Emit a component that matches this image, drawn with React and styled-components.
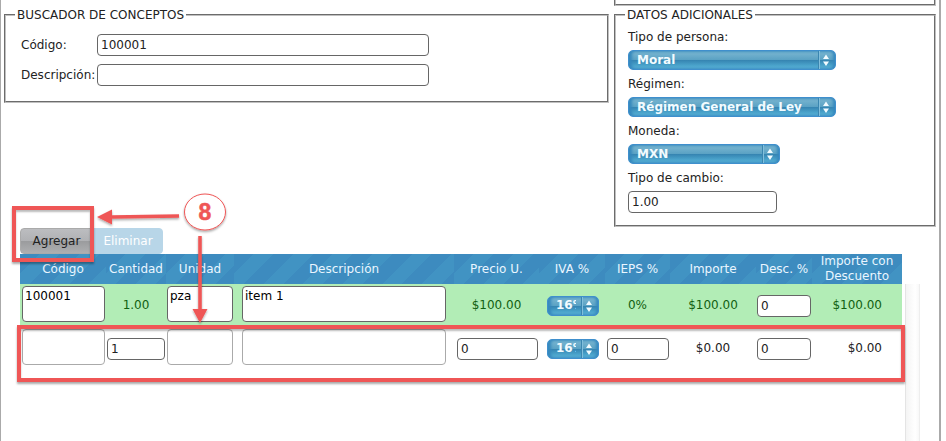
import React from "react";
import styled, { createGlobalStyle, css } from "styled-components";

const Global = createGlobalStyle`
  * { box-sizing: border-box; }
  body { margin: 0; background: #fff; color: #222; font: 12px/15px Verdana, "DejaVu Sans", sans-serif; }
  input, textarea, select, button { font: inherit; color: inherit; }
`;

const RED = "#ef5656";

const Page = styled.main`
  display: flex;
  flex-direction: column;
  margin-right: 5px;
  min-height: 100vh;
  border-left: 1px solid #aaa;
  border-right: 2px solid #aaa;
  padding: 0 3px;
`;

const Columns = styled.div`
  display: grid;
  grid-template-columns: minmax(0, 605fr) minmax(0, 322fr);
  column-gap: 5px;
  align-items: start;
`;

const PanelEnd = styled.div`
  grid-column: 2;
  height: 6px;
  border: 2px groove #c0c0c0;
  border-top: 0;
`;

const Panel = styled.fieldset`
  margin: 0;
  min-width: 0;
  border: 2px groove #c0c0c0;
  padding: ${(p) => (p.$roomy ? "11px 15px 15px" : "7px 12px 12px")};
`;

const Legend = styled.legend`
  margin-left: ${(p) => (p.$roomy ? "-6px" : "-3px")};
  padding: 2px 2px 0;
`;

const fieldBorder = css`
  border: 1px solid #666;
  border-radius: 4px;
  background: #fff;
`;

const TextInput = styled.input`
  ${fieldBorder}
  display: block;
  width: 100%;
  height: 22px;
  padding: 0 3px;
`;

const TextBox = styled.textarea`
  ${fieldBorder}
  border-color: ${(p) => (p.$pale ? "#aaa" : "#666")};
  display: block;
  width: 100%;
  height: 36px;
  padding: 2px;
  resize: none;
  overflow: hidden;
  color: #000;
`;

const SearchRow = styled.div`
  display: grid;
  grid-template-columns: 76px minmax(0, 332px);
  align-items: center;
  & + & { margin-top: 8px; }
`;

const Stack = styled.div`
  display: grid;
  gap: 7px;
  justify-items: start;
`;

const Field = styled.div`
  display: grid;
  row-gap: 5px;
  width: ${(p) => p.$width}px;
  max-width: 100%;
`;

const SelectShell = styled.span`
  position: relative;
  display: block;
  height: 20px;
`;

const Select = styled.select`
  appearance: none;
  display: block;
  width: 100%;
  height: 20px;
  border: 1px solid #3f8fcd;
  border-radius: 5px;
  padding: 0 ${(p) => (p.$small ? 22 : 24)}px 0 8px;
  color: #f2fbff;
  font-weight: bold;
  background: linear-gradient(#7db8d2 0%, #5ba2c4 48%, #3685b2 52%, #4aa3cb 80%, #60b6da 100%);
  box-shadow: inset 3px 0 3px #3689bd, inset -2px 0 3px #3689bd;
`;

const Stepper = styled.svg`
  position: absolute;
  top: 1px;
  right: 2px;
  pointer-events: none;
`;

const Actions = styled.div`
  display: flex;
  margin: 1px 0 0 16px;
`;

const Button = styled.button`
  display: block;
  height: 26px;
  border: 1px solid ${(p) => (p.$muted ? "#b8d6e8" : "#aaa")};
  border-radius: ${(p) => (p.$muted ? "0 4px 4px 0" : "4px 0 0 4px")};
  padding: 0;
  width: ${(p) => (p.$muted ? 70 : 73)}px;
  background: ${(p) => (p.$muted ? "#b8d6e8" : "linear-gradient(#bcbdc0 0%, #b0b1b4 50%, #9b9c9e 52%, #aeafb1 100%)")};
  color: ${(p) => (p.$muted ? "#fff" : "#222")};
`;

const Target = styled.div`
  position: relative;
`;

const Frame = styled.div`
  position: absolute;
  z-index: 1;
  inset: ${(p) => p.$inset};
  height: ${(p) => (p.$height ? `${p.$height}px` : "auto")};
  border: 4px solid ${RED};
  box-shadow: 0 2px 2px #0005, inset 0 2px 2px #0004;
  pointer-events: none;
`;

const Marks = styled.svg`
  position: absolute;
  left: 74px;
  top: -36px;
  overflow: visible;
  pointer-events: none;
  z-index: 2;
`;

const GridArea = styled.section`
  flex: 1;
  display: grid;
  grid-template-columns: minmax(0, 1fr) 15px;
  column-gap: 3px;
  margin: 0 16px 0 16px;
`;

const Track = styled.div`
  margin-top: 30px;
  border-left: 1px solid #e4e4e4;
  border-right: 1px solid #eee;
  background: linear-gradient(90deg, #f4f4f4, #fff 70%, #f8f8f8);
`;

const Table = styled.table`
  width: 100%;
  table-layout: fixed;
  border-collapse: collapse;
`;

const Head = styled.th`
  height: 30px;
  padding: 0;
  color: #eaf6ff;
  font-weight: normal;
  background: #4193c3 repeating-linear-gradient(135deg, #3d8bbf 0 14px, #4193c3 14px 28px);
`;

const Row = styled.tr`
  height: 43px;
  background: ${(p) => (p.$filled ? "#b2edb6" : "#fff")};
  color: ${(p) => (p.$filled ? "#116011" : "#222")};
`;

const Cell = styled.td`
  padding: ${(p) => p.$pad || "0 1px"};
  text-align: ${(p) => p.$align || "center"};
  & input { color: #222; }
`;

const BoxCell = styled.td`
  padding: ${(p) => p.$pad || "2px 1px 0"};
  vertical-align: top;
`;

const columns = [
  ["Código", 86], ["Cantidad", 60], ["Unidad", 68], ["Descripción", 220], ["Precio U.", 85],
  ["IVA %", 66], ["IEPS %", 65], ["Importe", 86], ["Desc. %", 56], ["Importe con Descuento", 90],
];

function Dropdown({ small, children, ...rest }) {
  return (
    <SelectShell>
      <Select $small={small} {...rest}>
        <option>{children}</option>
      </Select>
      <Stepper width="17" height="18" viewBox="0 0 17 18" aria-hidden="true">
        <path d="M1.5 0v18" stroke="#3a86b0" />
        <path d="M2.5 0v18" stroke="#82bfdc" />
        <path d="M6 8L9 3.500 12 8zM6 10.500h6L9 15z" fill="#f2fbff" />
      </Stepper>
    </SelectShell>
  );
}

function LabeledField({ id, label, width, children }) {
  return (
    <Field $width={width}>
      <label htmlFor={id}>{label}</label>
      {children}
    </Field>
  );
}

export default function App() {
  return (
    <Page>
      <Global />
      <Columns>
        <PanelEnd />
        <Panel $roomy>
          <Legend $roomy>BUSCADOR DE CONCEPTOS</Legend>
          <SearchRow>
            <label htmlFor="codigo">Código:</label>
            <TextInput id="codigo" defaultValue="100001" />
          </SearchRow>
          <SearchRow>
            <label htmlFor="descripcion">Descripción:</label>
            <TextInput id="descripcion" />
          </SearchRow>
        </Panel>
        <Panel>
          <Legend>DATOS ADICIONALES</Legend>
          <Stack>
            <LabeledField id="persona" label="Tipo de persona:" width={208}>
              <Dropdown id="persona">Moral</Dropdown>
            </LabeledField>
            <LabeledField id="regimen" label="Régimen:" width={208}>
              <Dropdown id="regimen">Régimen General de Ley</Dropdown>
            </LabeledField>
            <LabeledField id="moneda" label="Moneda:" width={152}>
              <Dropdown id="moneda">MXN</Dropdown>
            </LabeledField>
            <LabeledField id="cambio" label="Tipo de cambio:" width={149}>
              <TextInput id="cambio" defaultValue="1.00" />
            </LabeledField>
          </Stack>
        </Panel>
      </Columns>

      <Actions>
        <Target>
          <Button type="button">Agregar</Button>
          <Frame $inset="-22px -1px -8px -8px" />
          <Marks width="140" height="140" viewBox="0 0 140 140" aria-hidden="true">
            <defs>
              <filter id="soft" x="-20%" y="-20%" width="140%" height="150%">
                <feDropShadow dx="0" dy="1.500" stdDeviation="1" floodOpacity="0.350" />
              </filter>
            </defs>
            <g filter="url(#soft)">
              <path d="M18 25L85 24M106 44V123" stroke={RED} strokeWidth="3.500" />
              <path d="M3 25l15-7.500v15zM98.500 117h15L106 131z" fill={RED} />
              <ellipse cx="111" cy="20" rx="20.500" ry="18" fill="#fff" stroke={RED} />
            </g>
            <text x="111" y="28" textAnchor="middle" fill={RED} stroke={RED} strokeWidth="0.500" fontFamily="Liberation Sans, sans-serif" fontSize="23" fontWeight="bold">8</text>
          </Marks>
        </Target>
        <Button type="button" $muted>Eliminar</Button>
      </Actions>

      <GridArea>
        <Target>
          <Table>
            <colgroup>
              {columns.map(([name, width]) => <col key={name} width={width} />)}
            </colgroup>
            <thead>
              <tr>{columns.map(([name]) => <Head key={name} scope="col">{name}</Head>)}</tr>
            </thead>
            <tbody>
              <Row $filled>
                <BoxCell $pad="2px 1px 0 2px"><TextBox aria-label="Código" defaultValue="100001" /></BoxCell>
                <Cell>1.00</Cell>
                <BoxCell><TextBox aria-label="Unidad" defaultValue="pza" /></BoxCell>
                <BoxCell $pad="2px 8px 0"><TextBox aria-label="Descripción" defaultValue="item 1" /></BoxCell>
                <Cell>$100.00</Cell>
                <Cell $pad="0 6px 0 8px"><Dropdown small aria-label="IVA %">16%</Dropdown></Cell>
                <Cell>0%</Cell>
                <Cell>$100.00</Cell>
                <Cell><TextInput aria-label="Desc. %" defaultValue="0" /></Cell>
                <Cell $pad="0 20px 0 0" $align="right">$100.00</Cell>
              </Row>
              <Row>
                <BoxCell $pad="2px 1px 0 2px"><TextBox $pale aria-label="Código" /></BoxCell>
                <Cell><TextInput aria-label="Cantidad" defaultValue="1" /></Cell>
                <BoxCell><TextBox $pale aria-label="Unidad" /></BoxCell>
                <BoxCell $pad="2px 8px 0"><TextBox $pale aria-label="Descripción" /></BoxCell>
                <Cell $pad="0 1px 0 3px"><TextInput aria-label="Precio unitario" defaultValue="0" /></Cell>
                <Cell $pad="0 6px 0 8px"><Dropdown small aria-label="IVA %">16%</Dropdown></Cell>
                <Cell $pad="0 1px 0 2px"><TextInput aria-label="IEPS %" defaultValue="0" /></Cell>
                <Cell>$0.00</Cell>
                <Cell><TextInput aria-label="Desc. %" defaultValue="0" /></Cell>
                <Cell $pad="0 20px 0 0" $align="right">$0.00</Cell>
              </Row>
            </tbody>
          </Table>
          <Frame $inset="71px -3px auto -3px" $height={57} />
        </Target>
        <Track />
      </GridArea>
    </Page>
  );
}
